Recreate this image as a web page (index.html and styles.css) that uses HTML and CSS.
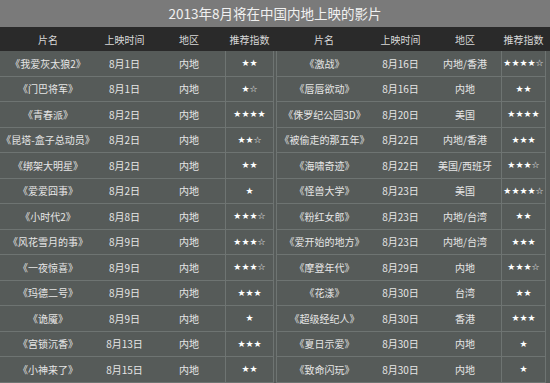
FILE: index.html
```html
<!DOCTYPE html>
<html lang="zh-CN">
<head>
<meta charset="utf-8">
<title>2013年8月将在中国内地上映的影片</title>
<link rel="stylesheet" href="styles.css">
</head>
<body>
<div class="page">
  <div class="title">2013年8月将在中国内地上映的影片</div>
  <div class="tables">
    <table class="films films-left">
      <colgroup><col class="c-name"><col class="c-date"><col class="c-area"><col class="c-star"></colgroup>
      <thead><tr><th>片名</th><th>上映时间</th><th>地区</th><th>推荐指数</th></tr></thead>
      <tbody>
        <tr><td>《我爱灰太狼2》</td><td>8月1日</td><td>内地</td><td class="star">★★</td></tr>
        <tr><td>《门巴将军》</td><td>8月1日</td><td>内地</td><td class="star">★☆</td></tr>
        <tr><td>《青春派》</td><td>8月2日</td><td>内地</td><td class="star">★★★★</td></tr>
        <tr><td>《昆塔-盒子总动员》</td><td>8月2日</td><td>内地</td><td class="star">★★☆</td></tr>
        <tr><td>《绑架大明星》</td><td>8月2日</td><td>内地</td><td class="star">★★</td></tr>
        <tr><td>《爱爱囧事》</td><td>8月2日</td><td>内地</td><td class="star">★</td></tr>
        <tr><td>《小时代2》</td><td>8月8日</td><td>内地</td><td class="star">★★★☆</td></tr>
        <tr><td>《风花雪月的事》</td><td>8月9日</td><td>内地</td><td class="star">★★★☆</td></tr>
        <tr><td>《一夜惊喜》</td><td>8月9日</td><td>内地</td><td class="star">★★★☆</td></tr>
        <tr><td>《玛德二号》</td><td>8月9日</td><td>内地</td><td class="star">★★★</td></tr>
        <tr><td>《诡魇》</td><td>8月9日</td><td>内地</td><td class="star">★</td></tr>
        <tr><td>《宫锁沉香》</td><td>8月13日</td><td>内地</td><td class="star">★★★</td></tr>
        <tr><td>《小神来了》</td><td>8月15日</td><td>内地</td><td class="star">★★</td></tr>
      </tbody>
    </table>
    <table class="films films-right">
      <colgroup><col class="c-name"><col class="c-date"><col class="c-area"><col class="c-star"></colgroup>
      <thead><tr><th>片名</th><th>上映时间</th><th>地区</th><th>推荐指数</th></tr></thead>
      <tbody>
        <tr><td>《激战》</td><td>8月16日</td><td>内地/香港</td><td class="star">★★★★☆</td></tr>
        <tr><td>《唇唇欲动》</td><td>8月16日</td><td>内地</td><td class="star">★★</td></tr>
        <tr><td>《侏罗纪公园3D》</td><td>8月20日</td><td>美国</td><td class="star">★★★★</td></tr>
        <tr><td>《被偷走的那五年》</td><td>8月22日</td><td>内地/香港</td><td class="star">★★★</td></tr>
        <tr><td>《海啸奇迹》</td><td>8月22日</td><td>美国/西班牙</td><td class="star">★★★☆</td></tr>
        <tr><td>《怪兽大学》</td><td>8月23日</td><td>美国</td><td class="star">★★★★☆</td></tr>
        <tr><td>《粉红女郎》</td><td>8月23日</td><td>内地/台湾</td><td class="star">★★</td></tr>
        <tr><td>《爱开始的地方》</td><td>8月23日</td><td>内地/台湾</td><td class="star">★★★</td></tr>
        <tr><td>《摩登年代》</td><td>8月29日</td><td>内地</td><td class="star">★★★☆</td></tr>
        <tr><td>《花漾》</td><td>8月30日</td><td>台湾</td><td class="star">★★</td></tr>
        <tr><td>《超级经纪人》</td><td>8月30日</td><td>香港</td><td class="star">★★★</td></tr>
        <tr><td>《夏日示爱》</td><td>8月30日</td><td>内地</td><td class="star">★</td></tr>
        <tr><td>《致命闪玩》</td><td>8月30日</td><td>内地</td><td class="star">★</td></tr>
      </tbody>
    </table>
  </div>
</div>
</body>
</html>
```

FILE: styles.css
```css
html, body {
  margin: 0;
  padding: 0;
  background: #565b59;
}
.page {
  width: 550px;
  overflow: hidden;
  font-family: "Noto Sans CJK SC", "Noto Sans", sans-serif;
}
.title {
  height: 27px;
  line-height: 27px;
  background: #7a7a7a;
  color: #f0f0f0;
  font-size: 13.5px;
  text-align: center;
}
.tables {
  display: flex;
  background: linear-gradient(#2a2a2a 0, #2a2a2a 24px, #565b59 24px);
}
.films {
  border-collapse: separate;
  border-spacing: 0;
  table-layout: fixed;
  flex: none;
}
.films-left {
  width: 274px;
  margin-right: 2px;
}
.films-right {
  width: 270px;
}
.c-name { width: 96px; }
.c-date { width: 57px; }
.c-area { width: 72px; }
.films th {
  height: 24px;
  padding: 0;
  background: #2a2a2a;
  color: #d8d8d8;
  font-size: 10px;
  font-weight: normal;
  text-align: center;
}
.films td {
  height: 24.5px;
  padding: 0;
  background: #565b59;
  border-bottom: 1px solid #6e7472;
  color: #e6e6e6;
  font-size: 10px;
  text-align: center;
  white-space: nowrap;
}
.films td:last-child {
  border-right: 1px solid #6e7472;
}
.films-right td:first-child {
  border-left: 1px solid #6e7472;
}
.films td.star {
  border-left: 1px solid #6e7472;
  color: #ffffff;
  font-family: "DejaVu Sans", sans-serif;
  font-size: 9px;
}
```
